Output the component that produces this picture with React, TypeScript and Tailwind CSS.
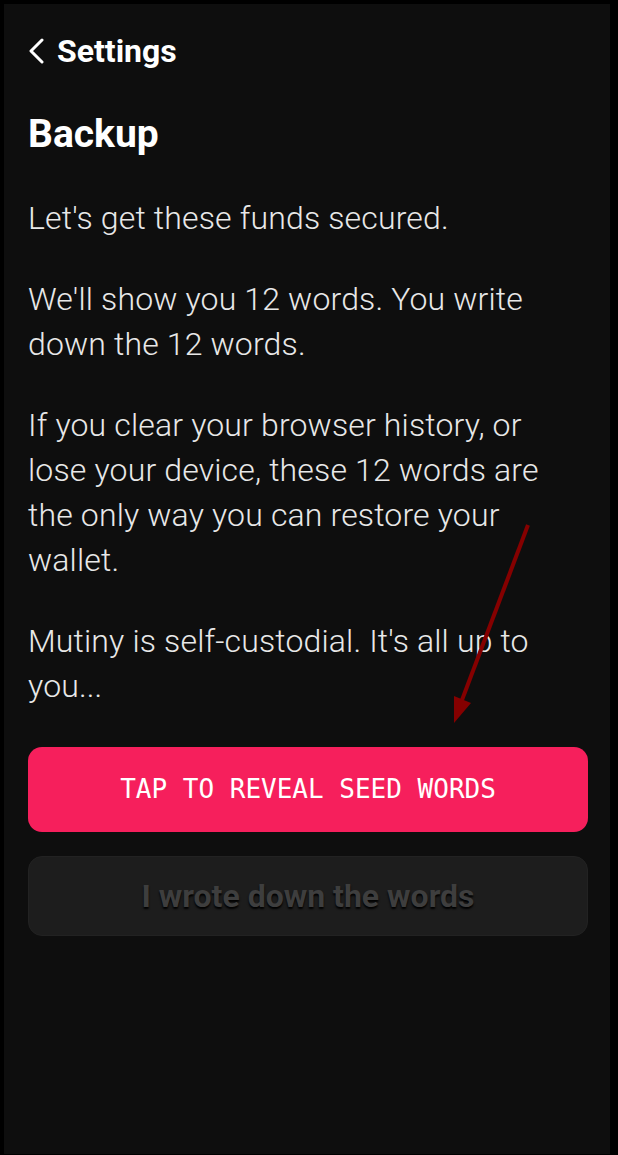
import React from "react";

const body = "text-[32px] leading-[45px] font-light tracking-[0.15px] text-[#e8e8e8]";

export default function App() {
  return (
    <div className="w-[618px] h-[1155px] bg-black pt-[4px] pl-[4px] pr-[8px] pb-[1px] font-['Roboto',sans-serif]">
      <div className="relative h-full w-full bg-[#0e0e0e] pl-6 pr-[22px] pt-[27px]">
        <div className="flex h-[40px] items-center gap-[12px]">
          <svg width="18" height="26" viewBox="0 0 18 26" className="-ml-[1px]">
            <polyline points="15,2 4,13 15,24" fill="none" stroke="#fff" strokeWidth="3" strokeLinecap="round" strokeLinejoin="round" />
          </svg>
          <span className="text-[32px] font-bold text-white leading-[40px]">Settings</span>
        </div>
        <h1 className="mt-[41px] h-[44px] text-[39px] font-bold leading-[44px] text-white">Backup</h1>
        <div className="mt-[40px] flex flex-col gap-[36px]">
          <p className={body}>Let's get these funds secured.</p>
          <p className={body}>We'll show you 12 words. You write down the 12 words.</p>
          <p className={body}>
            If you clear your browser history, or lose your device, these 12 words are the only way you can restore your wallet.
          </p>
          <p className={body}>Mutiny is self-custodial. It's all up to you...</p>
        </div>
        <button className="mt-[38px] flex h-[85px] w-full items-center justify-center rounded-[14px] bg-[#f61f5c] font-['DejaVu_Sans_Mono',monospace] text-[26px] text-white">
          TAP TO REVEAL SEED WORDS
        </button>
        <button className="mt-[24px] flex h-[80px] w-full items-center justify-center rounded-[14px] border border-[#222] bg-[#1d1d1d] text-[32px] font-bold text-[#3e3e3e] [text-shadow:0_2px_2px_#000]">
          I wrote down the words
        </button>
        <svg className="pointer-events-none absolute left-[-4px] top-[-4px]" width="618" height="1155" viewBox="0 0 618 1155">
          <line x1="528" y1="525" x2="462" y2="700" stroke="#850000" strokeWidth="4" />
          <polygon points="454,723 471,703 454,696" fill="#850000" />
        </svg>
      </div>
    </div>
  );
}
